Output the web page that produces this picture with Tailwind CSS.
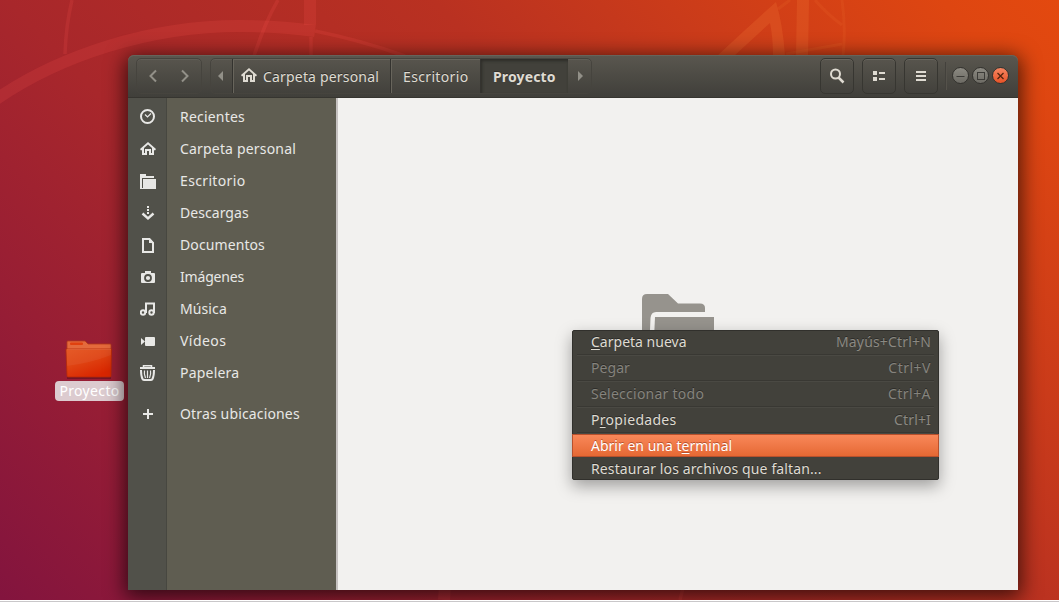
<!DOCTYPE html>
<html lang="es">
<head>
<meta charset="utf-8">
<title>Proyecto</title>
<script src="https://cdn.jsdelivr.net/npm/@tailwindcss/browser@4"></script>
</head>
<body class="relative h-[602px] w-[1059px] overflow-hidden whitespace-nowrap bg-white font-['Noto_Sans',sans-serif] text-[14px] leading-none">
<!-- wallpaper -->
<svg class="absolute left-0 top-0" width="1059" height="600" viewBox="0 0 1059 600">
  <defs>
    <linearGradient id="bg" gradientUnits="userSpaceOnUse" x1="110" y1="710" x2="949" y2="-110">
      <stop offset="0" stop-color="#83143e"/><stop offset=".19" stop-color="#981e34"/><stop offset=".36" stop-color="#a8272b"/><stop offset=".62" stop-color="#b93121"/><stop offset=".76" stop-color="#ca3b1a"/><stop offset=".93" stop-color="#de4611"/><stop offset="1" stop-color="#e3490f"/>
    </linearGradient>
  </defs>
  <rect width="1059" height="600" fill="url(#bg)"/>
  <g fill="none" stroke="#ff5a50" stroke-opacity=".16">
    <path d="M-5 100C60 55 150 26 240 26Q280 26 315 31" stroke-width="12"/>
    <path d="M310 0V25M445 585L444 600" stroke-width="12"/>
    <path d="M72 0Q66 25 65 54M278 0Q265 22 254 56M315 31Q360 40 405 56M311 37V56M683 588L680 600" stroke-width="3.500"/>
  </g>
  <g fill="#f47a35" fill-opacity=".24">
    <path d="M776 2Q783 25 785 56H773Q773 38 770 23L734 56H717Q748 27 776 2Z"/>
    <path d="M797 0H809L808 56H796Z"/>
  </g>
  <path d="M790 0L778 9M815 0Q827 14 842 25M842 0Q846 28 843 56M786 54L842 44" fill="none" stroke="#f47a35" stroke-opacity=".14" stroke-width="3"/>
</svg>

<!-- desktop folder -->
<div class="absolute left-[55px] top-[340px] flex w-[69px] flex-col items-center">
  <svg class="mr-0.5" width="48" height="40" viewBox="0 0 48 40">
    <defs>
      <linearGradient id="fold" x1="0" y1="0" x2=".6" y2="1"><stop offset="0" stop-color="#e4511c"/><stop offset=".5" stop-color="#df4312"/><stop offset="1" stop-color="#d92600"/></linearGradient>
    </defs>
    <path d="M2 38H46" stroke="#5d1020" stroke-opacity=".6" stroke-width="2"/>
    <path d="M2 2Q2 1 3 1H20L23 4H45Q46 4 46 5V10H2Z" fill="#e46a3c" stroke="#b53a18" stroke-width=".8"/>
    <rect x="5" y="2.500" width="13" height="2.500" rx="1" fill="#e0410f"/>
    <path d="M1 9H46.500L46 36Q46 37 45 37H3Q2 37 2 36Z" fill="url(#fold)" stroke="#b52a08" stroke-width=".8"/>
    <path d="M2 26Q26 23 46 15V9H1Z" fill="#fff" fill-opacity=".05"/>
    <path d="M2 9.500H46" stroke="#f08050" stroke-opacity=".5" stroke-width=".8"/>
  </svg>
  <div class="mt-px flex h-5 w-[69px] items-center justify-center rounded bg-[#dccbcf] tracking-[0.35px] text-white">Proyecto</div>
</div>

<!-- file manager -->
<main class="absolute left-[128px] top-[55px] flex h-[535px] w-[890px] flex-col rounded-t-[6px] shadow-[0_4px_20px_3px_rgba(0,0,0,0.65)]">
  <header class="flex h-[43px] shrink-0 items-start rounded-t-[6px] border-b border-[#363530] bg-linear-to-b from-[#5a574f] to-[#403f3a] pl-2 pt-[3px] shadow-[inset_0_1px_0_#66645b] text-[#dfdbd2] [text-shadow:0_-1px_0_#302f2b]">
    <div class="flex h-9 w-[66px] items-center justify-between rounded-[5px] border border-[#46443e] px-[11px] shadow-[inset_0_1px_0_#605e56]">
      <svg width="10" height="14" viewBox="0 0 10 14"><path d="M8 1.500L2.500 7L8 12.500" fill="none" stroke="#929088" stroke-width="2"/></svg>
      <svg width="10" height="14" viewBox="0 0 10 14"><path d="M2 1.500L7.500 7L2 12.500" fill="none" stroke="#929088" stroke-width="2"/></svg>
    </div>
    <nav class="ml-2 flex h-9 w-[382px] rounded-[5px] border border-[#46443e] shadow-[inset_0_1px_0_#605e56]">
      <div class="flex w-[21px] items-center justify-center pr-0.5"><svg width="5" height="10" viewBox="0 0 5 10"><path d="M5 0V10L0 5Z" fill="#929088"/></svg></div>
      <div class="flex w-[158px] items-center border-l border-[#34332f] pl-2 shadow-[inset_1px_1px_0_#68655c]">
        <svg width="16" height="16" viewBox="0 0 16 16" fill="#dfdbd2"><path d="M8 0L0 7L1 8.500L2 8V14H7V9H9V14H14V8L15 8.500L16 7ZM8 2.500L12 6V12H11V7H5V12H4V6Z" fill-rule="evenodd"/></svg>
        <span class="ml-1.5 mt-0.5 tracking-[0.18px]">Carpeta personal</span>
      </div>
      <div class="flex w-[90px] items-center border-l border-[#34332f] pl-3 shadow-[inset_1px_1px_0_#68655c]"><span class="mt-0.5 tracking-[0.35px]">Escritorio</span></div>
      <div class="flex w-[88px] items-center border-l border-[#34332f] bg-[#42413b] pl-3 font-bold shadow-[inset_1px_2px_3px_#2d2c28]"><span class="mt-0.5 tracking-[0.15px]">Proyecto</span></div>
      <div class="flex flex-1 items-center pl-2.5"><svg width="5" height="10" viewBox="0 0 5 10"><path d="M0 0V10L5 5Z" fill="#929088"/></svg></div>
    </nav>
    <div class="ml-[228px] flex gap-2">
      <div class="flex h-9 w-[34px] items-center justify-center rounded-[5px] border border-[#373631] shadow-[inset_0_1px_0_#68655c]"><svg width="16" height="16" viewBox="0 0 16 16"><circle cx="6.500" cy="6" r="4.500" fill="none" stroke="#dfdbd2" stroke-width="2"/><path d="M9.500 9.500L14.500 14.500" stroke="#dfdbd2" stroke-width="2.500"/></svg></div>
      <div class="flex h-9 w-[34px] items-center justify-center rounded-[5px] border border-[#373631] shadow-[inset_0_1px_0_#68655c]"><svg width="12" height="10" viewBox="0 0 12 10" fill="#dfdbd2"><path d="M0 0H4V4H0ZM6 1H12V3H6ZM0 6H4V10H0ZM6 7H12V9H6Z"/></svg></div>
      <div class="flex h-9 w-[34px] items-center justify-center rounded-[5px] border border-[#373631] shadow-[inset_0_1px_0_#68655c]"><svg width="10" height="10" viewBox="0 0 10 10" fill="#dfdbd2"><path d="M0 0H10V2H0ZM0 4H10V6H0ZM0 8H10V10H0Z"/></svg></div>
    </div>
    <div class="ml-[7px] mt-1 h-7 w-0.5 border-l border-r border-l-[#43413c] border-r-[#55524b]"></div>
    <div class="ml-[5px] mt-[9px] flex gap-[3px]">
      <div class="size-[17px] rounded-full border border-[#33322e] bg-linear-to-b from-[#8c8a82] to-[#6d6b64]"><svg width="15" height="15"><path d="M3.500 8.500H11.500" stroke="#3c3b37"/></svg></div>
      <div class="size-[17px] rounded-full border border-[#33322e] bg-linear-to-b from-[#8c8a82] to-[#6d6b64]"><svg width="15" height="15"><rect x="4.500" y="4.500" width="7" height="7" fill="none" stroke="#3c3b37"/></svg></div>
      <div class="size-[17px] rounded-full border border-[#33322e] bg-linear-to-b from-[#f58560] to-[#e75225]"><svg width="15" height="15"><path d="M4.500 5L10.500 11M10.500 5L4.500 11" stroke="#52240f" stroke-width="1.300"/></svg></div>
    </div>
  </header>
  <div class="flex min-h-0 flex-1">
    <aside class="flex w-[210px] border-r-2 border-[#c5c1c0] text-[#e8e8e6]">
      <div class="flex w-[39px] flex-col items-center border-r border-[#474740] bg-[#51514a] pl-0.5 pt-[3px]">
        <div class="flex h-8 items-center"><svg width="16" height="16" viewBox="0 0 16 16" fill="none" stroke="#e8e8e6"><circle cx="7.500" cy="7.500" r="6.500" stroke-width="2"/><path d="M5 5.500L7.500 8L11 4.500" stroke-width="1.200"/></svg></div>
        <div class="flex h-8 items-center"><svg width="16" height="16" viewBox="0 0 16 16" fill="#e8e8e6"><path d="M8 1L0 8L1 9.500L2 9V14H7V10H9V14H14V9L15 9.500L16 8ZM8 3.500L12 7V12H11V8H5V12H4V7Z" fill-rule="evenodd"/></svg></div>
        <div class="flex h-8 items-center"><svg width="16" height="16" viewBox="0 0 16 16" fill="#e8e8e6"><path d="M0 1H6V3H14V5H2V16H0ZM3 6H16V16H3Z"/><path d="M0 15H5V16H0Z"/></svg></div>
        <div class="flex h-8 items-center"><svg width="16" height="16" viewBox="0 0 16 16" fill="#e8e8e6"><path d="M7 1H9V3H7ZM7 4H9V6H7ZM7 7H9V9H7Z"/><path d="M2.500 8.500L8 13.500L13.500 8.500" fill="none" stroke="#e8e8e6" stroke-width="2.400"/></svg></div>
        <div class="flex h-8 items-center"><svg width="16" height="16" viewBox="0 0 16 16"><path d="M3 2H9.500L13 6V15H3Z" fill="none" stroke="#e8e8e6" stroke-width="2"/><path d="M9 1V6H14Z" fill="#e8e8e6"/></svg></div>
        <div class="flex h-8 items-center"><svg width="16" height="16" viewBox="0 0 16 16" fill="#e8e8e6"><path d="M5 2H11V4H14Q15 4 15 5V13Q15 14 14 14H2Q1 14 1 13V5Q1 4 2 4H5Z"/><circle cx="8" cy="9" r="3" fill="none" stroke="#51514a" stroke-width="1.800"/></svg></div>
        <div class="flex h-8 items-center"><svg width="16" height="16" viewBox="0 0 16 16" fill="none" stroke="#e8e8e6" stroke-width="2"><circle cx="3" cy="11.500" r="2.200"/><circle cx="11.500" cy="11.500" r="2.200"/><path d="M6 12V2.500H14V12"/></svg></div>
        <div class="flex h-8 items-center"><svg width="16" height="16" viewBox="0 0 16 16" fill="#e8e8e6"><path d="M1 5L5 8.500L1 12Z"/><rect x="5" y="4" width="10" height="9" rx="1"/></svg></div>
        <div class="flex h-8 items-center"><svg width="16" height="16" viewBox="0 0 16 16" fill="none" stroke="#e8e8e6"><path d="M3.500 2.500V.750H11.500V2.500" stroke-width="1.500"/><path d="M0 3H15" stroke-width="2"/><path d="M1 5Q1 11 2.500 14Q3 15 4.500 15H10.500Q12 15 12.500 14Q14 11 14 5" stroke-width="2"/><path d="M4.500 5.500Q3.800 9 5.500 13M7.500 5.500V13M10.500 5.500Q11.200 9 9.500 13" stroke-width="1.200"/></svg></div>
        <div class="mt-[9px] flex h-8 items-center"><svg width="16" height="16" viewBox="0 0 16 16"><path d="M8 3V13M3 8H13" stroke="#e8e8e6" stroke-width="2"/></svg></div>
      </div>
      <div class="flex flex-1 flex-col bg-[#5f5d51] pl-[13px] pt-[3px]">
        <div class="flex h-8 items-center tracking-[0.2px]">Recientes</div>
        <div class="flex h-8 items-center tracking-[0.18px]">Carpeta personal</div>
        <div class="flex h-8 items-center tracking-[0.35px]">Escritorio</div>
        <div class="flex h-8 items-center tracking-[0.05px]">Descargas</div>
        <div class="flex h-8 items-center tracking-[0.1px]">Documentos</div>
        <div class="flex h-8 items-center tracking-[-0.17px]">Imágenes</div>
        <div class="flex h-8 items-center tracking-[0.1px]">Música</div>
        <div class="flex h-8 items-center tracking-[0.45px]">Vídeos</div>
        <div class="flex h-8 items-center tracking-[0.2px]">Papelera</div>
        <div class="mt-[9px] flex h-8 items-center tracking-[0.15px]">Otras ubicaciones</div>
      </div>
    </aside>
    <section class="flex flex-1 justify-center bg-[#f2f1ef] pt-[196px]">
      <svg width="72" height="72" viewBox="0 0 72 72" fill="#96938d"><path d="M0 5Q0 0 5 0H26L36 9.500H58Q63 9.500 63 14V18H14Q9 18 8.500 24L7 60H0Z"/><path d="M13 23H72V66H11Z"/></svg>
    </section>
  </div>
</main>

<!-- context menu -->
<div class="absolute left-[572px] top-[330px] flex h-[150px] w-[367px] flex-col rounded-[2px] border border-[#31302c] bg-[#42413b] text-[#dfdbd2] shadow-[0_6px_16px_rgba(0,0,0,0.35)] [text-shadow:0_-1px_0_#2d2c29]">
  <div class="flex h-[23px] shrink-0 items-center justify-between pb-0.5 pl-[18px] pr-[7px]"><span class="tracking-[0.01px]"><u class="underline-offset-2">C</u>arpeta nueva</span><span class="tracking-[0.17px] text-[#8b8982]">Mayús+Ctrl+N</span></div>
  <div class="mx-1 mb-px h-0.5 shrink-0 border-y border-t-[#393833] border-b-[#4a4943]"></div>
  <div class="flex h-[23px] shrink-0 items-center justify-between pb-0.5 pl-[18px] pr-[7px] text-[#85837d]"><span class="tracking-[0.05px]">Pegar</span><span class="tracking-[0.5px]">Ctrl+V</span></div>
  <div class="mx-1 mb-px h-0.5 shrink-0 border-y border-t-[#393833] border-b-[#4a4943]"></div>
  <div class="flex h-[23px] shrink-0 items-center justify-between pb-0.5 pl-[18px] pr-[7px] text-[#85837d]"><span class="tracking-[0.25px]">Seleccionar todo</span><span class="tracking-[0.45px]">Ctrl+A</span></div>
  <div class="mx-1 mb-px h-0.5 shrink-0 border-y border-t-[#393833] border-b-[#4a4943]"></div>
  <div class="flex h-[23px] shrink-0 items-center justify-between pb-0.5 pl-[18px] pr-[7px]"><span class="tracking-[0.3px]">P<u class="underline-offset-2">r</u>opiedades</span><span class="tracking-[0.15px] text-[#8b8982]">Ctrl+I</span></div>
  <div class="mx-1 h-0.5 shrink-0 border-y border-t-[#393833] border-b-[#4a4943]"></div>
  <div class="-mx-px flex h-[23px] shrink-0 items-center border border-[#b8502c] bg-linear-to-b from-[#f98859] to-[#e56833] pl-[18px] text-white [text-shadow:0_-1px_0_#b8502c]"><span class="tracking-[0.01px]">Abrir en una t<u class="underline-offset-2">e</u>rminal</span></div>
  <div class="flex h-[22px] shrink-0 items-center pl-[18px] pt-px tracking-[0.12px]">Restaurar los archivos que faltan...</div>
</div>

<!-- lower screen edge -->
<div class="absolute bottom-0 left-0 h-0.5 w-full border-b border-[#c9c7c9] bg-white"></div>
</body>
</html>
